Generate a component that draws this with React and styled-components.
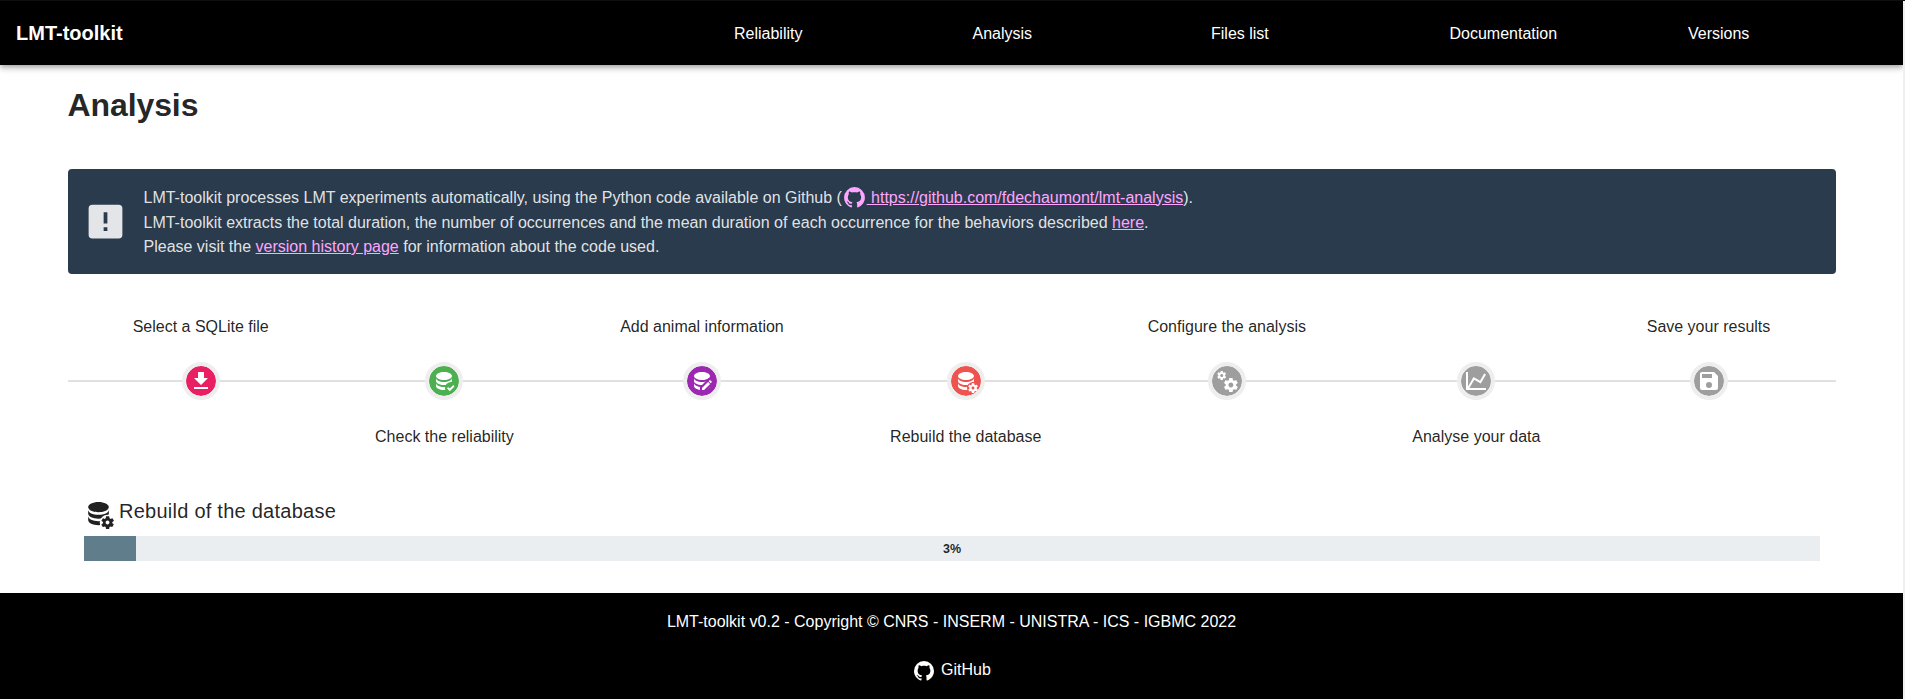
import React from "react";
import styled, { createGlobalStyle } from "styled-components";

const Global = createGlobalStyle`
  * { box-sizing: border-box; }
  body { margin: 0; background: #fff; font: 16px/24px "Liberation Sans", Arial, sans-serif; color: rgba(0,0,0,.87); overflow: hidden; }
`;
const Page = styled.div`
  height: 700px; display: flex; flex-direction: column;
  border-top: 1px solid #0f0f0f; border-bottom: 1px solid #f8f8f8;
`;
const Frame = styled.div`
  flex: 1; display: flex; flex-direction: column; border-right: 2px solid #f0f0f0;
`;
const Header = styled.header`
  height: 64px; background: #000; color: #fff; display: flex; align-items: center; padding-left: 16px;
  box-shadow: 0 2px 4px -1px rgba(0,0,0,.2), 0 4px 5px rgba(0,0,0,.14), 0 1px 10px rgba(0,0,0,.12);
  clip-path: inset(0 0 -20px 0);
`;
const Brand = styled.div`width: 718px; flex: none; font-size: 20px; font-weight: 700;`;
const Nav = styled.nav`display: flex; padding-top: 2px;`;
const NavLink = styled.a`width: 238.5px; flex: none; color: #fff;`;
const Main = styled.main`flex: 1; padding: 16px 67px 0 68px;`;
const Title = styled.h1`margin: 0 0 0 -0.5px; font-size: 32px; line-height: 48px; font-weight: 700; letter-spacing: -0.1px;`;
const Notice = styled.section`
  margin-top: 40px; height: 105px; padding: 0 16px 0 15px; border-radius: 4px; background: #2a3b4d;
  color: rgba(255,255,255,.87); display: flex; align-items: center;
`;
const NoticeText = styled.div`margin-left: 15.5px; padding-top: 1px;`;
const NoticeLine = styled.p`
  margin: 0; height: 24px; display: flex; align-items: center; white-space: pre;
  &:first-child { height: 25px; margin-bottom: 1px; }
`;
const Svg = styled.svg`
  width: ${p => p.$size}px; height: ${p => p.$size}px; fill: currentColor; flex: none; display: block;
`;
const InlineIcon = styled.span`display: inline-block; vertical-align: middle; margin: -4px -0.3px -3px 0;`;
const Link = styled.a`color: #ffa6ff; text-decoration: underline;`;
const Timeline = styled.section`
  margin-top: 40px; height: 138px; padding: 0 12.5px 0 11.5px; display: flex; justify-content: space-around;
  background: linear-gradient(#e0e0e0, #e0e0e0) 0 66px / 100% 2px no-repeat;
`;
const Step = styled.div`
  display: grid; grid-template-rows: 26px 82px 30px; justify-items: center; align-items: center;
`;
const Label = styled.div`grid-row: ${p => (p.$below ? 3 : 1)}; white-space: nowrap;`;
const Dot = styled.div`
  grid-row: 2; width: 38px; height: 38px; border-radius: 50%; border: 4px solid #eee;
  background: ${p => p.$color}; background-clip: padding-box; color: #fff;
  display: flex; align-items: center; justify-content: center;
`;
const Progress = styled.section`padding: 43px 16px 0;`;
const ProgressTitle = styled.h2`
  margin: 0; display: flex; font-size: 20px; line-height: 32px; font-weight: 400; letter-spacing: .25px;
`;
const ProgressIcon = styled.span`width: 36px; margin-left: -1px; padding-top: 3px; margin-bottom: -8px;`;
const Track = styled.div`
  margin-top: 9px; height: 25px; display: grid; align-items: center; background: #eaeef1;
`;
const Fill = styled.div`grid-area: 1 / 1; height: 25px; width: 52px; background: #607d8b;`;
const Percent = styled.strong`grid-area: 1 / 1; text-align: center; font-size: 12.5px; line-height: 20px; padding-top: 1px;`;
const Footer = styled.footer`
  height: 106px; background: #000; color: #fff; display: flex; flex-direction: column; align-items: center; padding-top: 17px;
`;
const FooterLink = styled.a`margin-top: 24px; display: flex; gap: 5px; color: #fff;`;
const FooterIcon = styled.span`padding-top: 1px;`;

const database = "M12,3C7.58,3 4,4.79 4,7C4,9.21 7.58,11 12,11C16.42,11 20,9.21 20,7C20,4.79 16.42,3 12,3M4,9V12C4,14.21 7.58,16 12,16C16.42,16 20,14.21 20,12V9C20,11.21 16.42,13 12,13C7.58,13 4,11.21 4,9M4,14V17C4,19.21 7.58,21 12,21C16.42,21 20,19.21 20,17V14C20,16.21 16.42,18 12,18C7.58,18 4,16.21 4,14Z";
const cog = "M23.8 20.4C23.9 20.4 23.9 20.5 23.8 20.6L22.8 22.3C22.7 22.4 22.6 22.4 22.5 22.4L21.3 22C21 22.2 20.8 22.3 20.5 22.5L20.3 23.8C20.3 23.9 20.2 24 20.1 24H18.1C18 24 17.9 23.9 17.8 23.8L17.6 22.5C17.3 22.4 17 22.2 16.8 22L15.6 22.5C15.5 22.5 15.4 22.5 15.3 22.4L14.3 20.7C14.2 20.6 14.3 20.5 14.4 20.4L15.5 19.6V18.6L14.4 17.8C14.3 17.7 14.3 17.6 14.3 17.5L15.3 15.8C15.4 15.7 15.5 15.7 15.6 15.7L16.8 16.2C17.1 16 17.3 15.9 17.6 15.7L17.8 14.4C17.8 14.3 17.9 14.2 18.1 14.2H20.1C20.2 14.2 20.3 14.3 20.3 14.4L20.5 15.7C20.8 15.8 21.1 16 21.4 16.2L22.6 15.7C22.7 15.7 22.9 15.7 22.9 15.8L23.9 17.5C24 17.6 23.9 17.7 23.8 17.8L22.7 18.6V19.6L23.8 20.4M20.5 19C20.5 18.2 19.8 17.5 19 17.5S17.5 18.2 17.5 19 18.2 20.5 19 20.5 20.5 19.8 20.5 19Z";
const paths = {
  alert: "M5,3H19A2,2 0 0,1 21,5V19A2,2 0 0,1 19,21H5A2,2 0 0,1 3,19V5A2,2 0 0,1 5,3M13,13V7H11V13H13M13,17V15H11V17H13Z",
  github: "M12,2A10,10 0 0,0 2,12C2,16.42 4.87,20.17 8.84,21.5C9.34,21.58 9.5,21.27 9.5,21C9.5,20.77 9.5,20.14 9.5,19.31C6.73,19.91 6.14,17.97 6.14,17.97C5.68,16.81 5.03,16.5 5.03,16.5C4.12,15.88 5.1,15.9 5.1,15.9C6.1,15.97 6.63,16.93 6.63,16.93C7.5,18.45 8.97,18 9.54,17.76C9.63,17.11 9.89,16.67 10.17,16.42C7.95,16.17 5.62,15.31 5.62,11.5C5.62,10.39 6,9.5 6.65,8.79C6.55,8.54 6.2,7.5 6.75,6.15C6.75,6.15 7.59,5.88 9.5,7.17C10.29,6.95 11.15,6.84 12,6.84C12.85,6.84 13.71,6.95 14.5,7.17C16.41,5.88 17.25,6.15 17.25,6.15C17.8,7.5 17.45,8.54 17.35,8.79C18,9.5 18.38,10.39 18.38,11.5C18.38,15.32 16.04,16.16 13.81,16.41C14.17,16.72 14.5,17.33 14.5,18.26C14.5,19.6 14.5,20.68 14.5,21C14.5,21.27 14.66,21.59 15.17,21.5C19.14,20.16 22,16.42 22,12A10,10 0 0,0 12,2Z",
  download: "M5,20H19V18H5M19,9H15V3H9V9H5L12,16L19,9Z",
  cogs: "M15.9,18.45C17.25,18.45 18.35,17.35 18.35,16C18.35,14.65 17.25,13.55 15.9,13.55C14.54,13.55 13.45,14.65 13.45,16C13.45,17.35 14.54,18.45 15.9,18.45M21.1,16.68L22.58,17.84C22.71,17.95 22.75,18.13 22.66,18.29L21.26,20.71C21.17,20.86 21,20.92 20.83,20.86L19.09,20.16C18.73,20.44 18.33,20.67 17.91,20.85L17.64,22.7C17.62,22.87 17.47,23 17.3,23H14.5C14.32,23 14.18,22.87 14.15,22.7L13.89,20.85C13.46,20.67 13.07,20.44 12.71,20.16L10.96,20.86C10.81,20.92 10.62,20.86 10.54,20.71L9.14,18.29C9.05,18.13 9.09,17.95 9.22,17.84L10.7,16.68L10.65,16L10.7,15.31L9.22,14.16C9.09,14.05 9.05,13.86 9.14,13.71L10.54,11.29C10.62,11.13 10.81,11.07 10.96,11.13L12.71,11.84C13.07,11.56 13.46,11.32 13.89,11.15L14.15,9.29C14.18,9.13 14.32,9 14.5,9H17.3C17.47,9 17.62,9.13 17.64,9.29L17.91,11.15C18.33,11.32 18.73,11.56 19.09,11.84L20.83,11.13C21,11.07 21.17,11.13 21.26,11.29L22.66,13.71C22.75,13.86 22.71,14.05 22.58,14.16L21.1,15.31L21.15,16L21.1,16.68M6.69,8.07C7.56,8.07 8.26,7.37 8.26,6.5C8.26,5.63 7.56,4.92 6.69,4.92A1.58,1.58 0 0,0 5.11,6.5C5.11,7.37 5.82,8.07 6.69,8.07M10.03,6.94L11,7.68C11.07,7.75 11.09,7.87 11.03,7.97L10.13,9.53C10.08,9.63 9.96,9.67 9.86,9.63L8.74,9.18L8,9.62L7.81,10.81C7.79,10.92 7.7,11 7.59,11H5.79C5.67,11 5.58,10.92 5.56,10.81L5.4,9.62L4.64,9.18L3.52,9.63C3.41,9.67 3.3,9.63 3.24,9.53L2.34,7.97C2.28,7.87 2.31,7.75 2.39,7.68L3.34,6.94L3.31,6.5L3.34,6.06L2.39,5.32C2.31,5.25 2.28,5.13 2.34,5.03L3.24,3.47C3.3,3.37 3.41,3.33 3.52,3.37L4.63,3.82L5.4,3.38L5.56,2.19C5.58,2.08 5.67,2 5.79,2H7.59C7.7,2 7.79,2.08 7.81,2.19L8,3.38L8.74,3.82L9.86,3.37C9.96,3.33 10.08,3.37 10.13,3.47L11.03,5.03C11.09,5.13 11.07,5.25 11,5.32L10.03,6.06L10.06,6.5L10.03,6.94Z",
  chart: "M16,11.78L20.24,4.45L21.97,5.45L16.74,14.5L10.23,10.75L5.46,19H22V21H2V3H4V17.54L9.5,8L16,11.78Z",
  save: "M15,9H5V5H15M12,19A3,3 0 0,1 9,16A3,3 0 0,1 12,13A3,3 0 0,1 15,16A3,3 0 0,1 12,19M17,3H5C3.89,3 3,3.9 3,5V19A2,2 0 0,0 5,21H19A2,2 0 0,0 21,19V7L17,3Z",
};
const badges = {
  check: { cut: <circle cx="19" cy="19" r="6" />, d: "M17.75 22.16L15 19.16L16.16 18L17.75 19.59L21.34 16L22.5 17.41Z" },
  edit: { cut: <path d="M10 24V18L19 9L24 14L14 24Z" />, d: "M21.7 13.35L20.7 14.35L18.65 12.3L19.65 11.3C19.86 11.09 20.21 11.09 20.42 11.3L21.7 12.58C21.91 12.79 21.91 13.14 21.7 13.35M12 18.94L18.07 12.88L20.12 14.93L14.06 21H12V18.94Z" },
  cog: { cut: <circle cx="19" cy="19" r="6" />, d: cog },
};

function Icon({ name, size = 24 }) {
  return <Svg $size={size} viewBox="0 0 24 24" aria-hidden="true"><path fillRule="evenodd" d={paths[name]} /></Svg>;
}
function DatabaseIcon({ badge, size = 24 }) {
  const id = `cut-${badge}-${size}`;
  return (
    <Svg $size={size} viewBox="0 0 24 24" aria-hidden="true">
      <mask id={id}><rect width="24" height="24" fill="#fff" /><g fill="#000">{badges[badge].cut}</g></mask>
      <path d={database} mask={`url(#${id})`} />
      <path d={badges[badge].d} fillRule="evenodd" />
    </Svg>
  );
}

const steps = [
  ["Select a SQLite file", "#e91e63", <Icon name="download" />],
  ["Check the reliability", "#4caf50", <DatabaseIcon badge="check" />],
  ["Add animal information", "#9c27b0", <DatabaseIcon badge="edit" />],
  ["Rebuild the database", "#ef5350", <DatabaseIcon badge="cog" />],
  ["Configure the analysis", "#9e9e9e", <Icon name="cogs" />],
  ["Analyse your data", "#9e9e9e", <Icon name="chart" />],
  ["Save your results", "#9e9e9e", <Icon name="save" />],
];
const links = ["Reliability", "Analysis", "Files list", "Documentation", "Versions"];

export default function App() {
  return (
    <Page>
      <Global />
      <Frame>
        <Header>
          <Brand>LMT-toolkit</Brand>
          <Nav>{links.map(l => <NavLink key={l}>{l}</NavLink>)}</Nav>
        </Header>
        <Main>
          <Title>Analysis</Title>
          <Notice>
            <Icon name="alert" size={45} />
            <NoticeText>
              <NoticeLine>
                <span>LMT-toolkit processes LMT experiments automatically, using the Python code available on Github (<Link><InlineIcon><Icon name="github" size={25} /></InlineIcon> https://github.com/fdechaumont/lmt-analysis</Link>).</span>
              </NoticeLine>
              <NoticeLine>
                <span>LMT-toolkit extracts the total duration, the number of occurrences and the mean duration of each occurrence for the behaviors described <Link>here</Link>.</span>
              </NoticeLine>
              <NoticeLine>
                <span>Please visit the <Link>version history page</Link> for information about the code used.</span>
              </NoticeLine>
            </NoticeText>
          </Notice>
          <Timeline>
            {steps.map(([label, color, icon], i) => (
              <Step key={label}>
                <Label $below={i % 2 === 1}>{label}</Label>
                <Dot $color={color}>{icon}</Dot>
              </Step>
            ))}
          </Timeline>
          <Progress>
            <ProgressTitle>
              <ProgressIcon><DatabaseIcon badge="cog" size={31} /></ProgressIcon>
              Rebuild of the database
            </ProgressTitle>
            <Track><Fill /><Percent>3%</Percent></Track>
          </Progress>
        </Main>
        <Footer>
          <div>LMT-toolkit v0.2 - Copyright © CNRS - INSERM - UNISTRA - ICS - IGBMC 2022</div>
          <FooterLink><FooterIcon><Icon name="github" /></FooterIcon>GitHub</FooterLink>
        </Footer>
      </Frame>
    </Page>
  );
}
